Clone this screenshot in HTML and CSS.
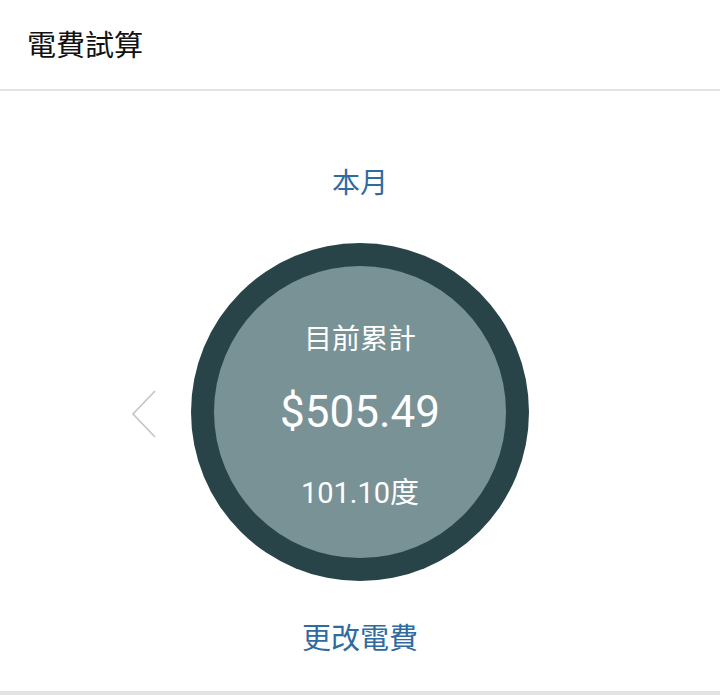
FILE: index.html
```html
<!DOCTYPE html>
<html lang="zh-Hant">
<head>
    <meta charset="UTF-8">
    <meta name="viewport" content="width=device-width, initial-scale=1.0">
    <title>電費試算</title>
    <link rel="stylesheet" href="styles.css">
</head>
<body>

    <!-- 상단 제목 -->
    <header class="topbar">
        <h1 class="topbar-title">電費試算</h1>
    </header>

    <main class="meter">
        <div class="meter-period">本月</div>

        <div class="meter-row">
            <button class="meter-prev" aria-label="上個月">
                <svg width="28" height="50" viewBox="0 0 28 50">
                    <polyline points="25,2 3,25 25,48" fill="none" stroke="#c4c4c4" stroke-width="1.6"/>
                </svg>
            </button>

            <div class="meter-ring">
                <div class="meter-face">
                    <div class="meter-label">目前累計</div>
                    <div class="meter-amount">$505.49</div>
                    <div class="meter-usage">101.10度</div>
                </div>
            </div>
        </div>

        <a class="meter-change" href="#">更改電費</a>
    </main>

    <div class="bottom-line"></div>

</body>
</html>
```

FILE: styles.css
```css
body {
    margin: 0;
    background: #ffffff;
    font-family: Roboto, "Noto Sans CJK TC", sans-serif;
}

/* 상단 바 */
.topbar {
    height: 89px;
    border-bottom: 2px solid #e3e3e3;
    display: flex;
    align-items: center;
    padding-left: 27px;
}

.topbar-title {
    margin: 0;
    font-size: 29px;
    font-weight: 400;
    color: #111111;
    padding-bottom: 4px;
}

/* 본문 */
.meter {
    display: flex;
    flex-direction: column;
    align-items: center;
    height: 600px;
}

.meter-period {
    margin-top: 73px;
    font-size: 28px;
    color: #2f6aa1;
    line-height: 40px;
}

.meter-row {
    position: relative;
    margin-top: 39px;
}

.meter-prev {
    position: absolute;
    left: -61px;
    top: 146px;
    background: none;
    border: none;
    padding: 0;
}

.meter-ring {
    width: 338px;
    height: 338px;
    border-radius: 50%;
    background: #284449;
    display: flex;
    align-items: center;
    justify-content: center;
}

.meter-face {
    width: 292px;
    height: 292px;
    border-radius: 50%;
    background: #789296;
    color: #ffffff;
    display: flex;
    flex-direction: column;
    align-items: center;
}

.meter-label {
    margin-top: 55px;
    font-size: 28px;
    line-height: 38px;
}

.meter-amount {
    margin-top: 28px;
    font-size: 44px;
    line-height: 50px;
}

.meter-usage {
    margin-top: 37px;
    font-size: 29px;
    line-height: 38px;
}

.meter-change {
    margin-top: 38px;
    font-size: 29px;
    line-height: 40px;
    color: #2f6aa1;
    text-decoration: none;
}

.bottom-line {
    border-top: 4px solid #e3e3e3;
}
```
